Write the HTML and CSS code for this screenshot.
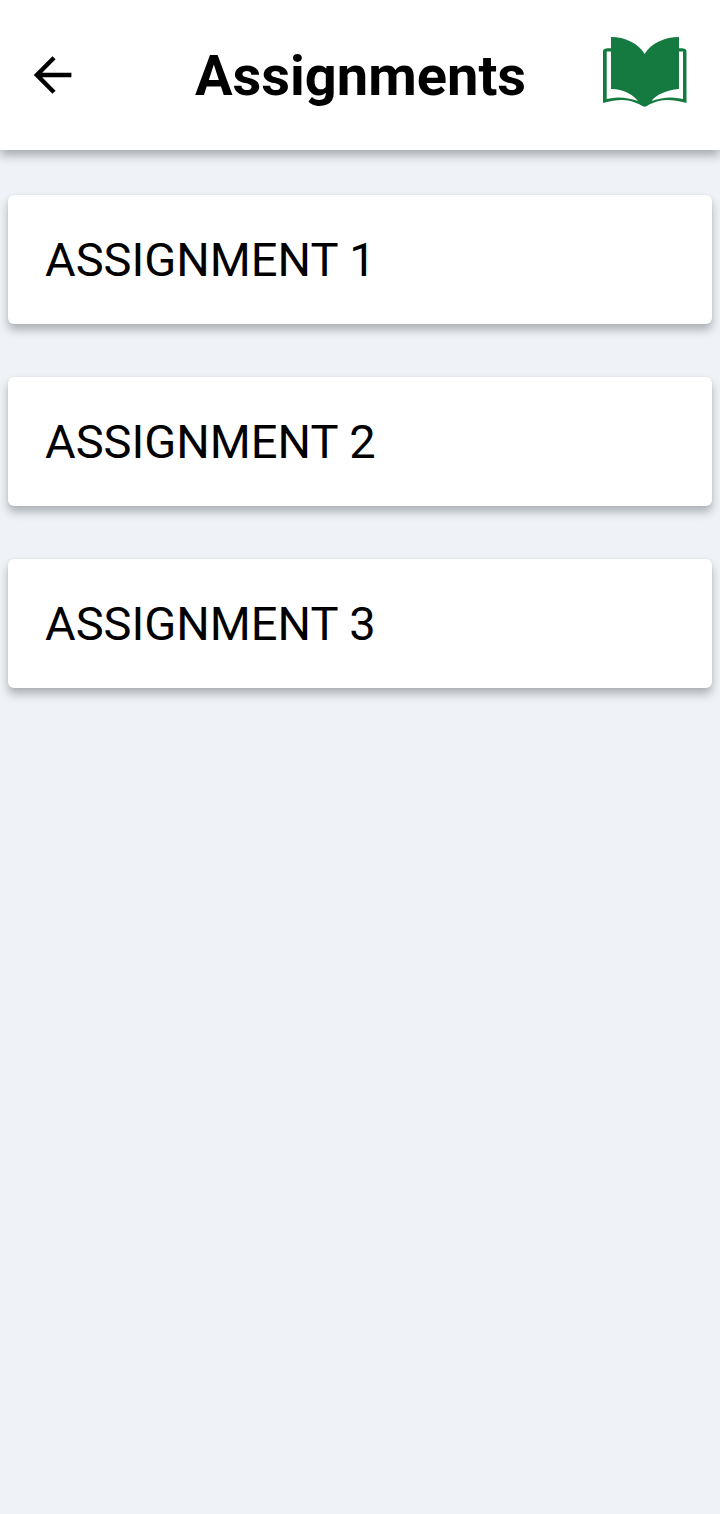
FILE: index.html
```html
<!DOCTYPE html>
<html lang="en">
<head>
<meta charset="utf-8">
<meta name="viewport" content="width=device-width, initial-scale=1">
<title>Assignments</title>
<link rel="stylesheet" href="styles.css">
</head>
<body>
<header class="app-bar">
  <button class="back" type="button" aria-label="Back">
    <svg viewBox="0 0 38 38" width="38" height="38" fill="none" stroke="#000" stroke-width="4.4" aria-hidden="true">
      <path d="M20 1.800 2.900 19 20 36.200M3.500 19H37.400"/>
    </svg>
  </button>
  <h1 class="title">Assignments</h1>
  <svg class="logo" viewBox="0 0 84 70" width="84" height="70" fill="#157a40" aria-hidden="true">
    <path d="M8 0C22 0 35 6 41.7 17 48 6 62 0 76 0V52C63 53 53 58 48.500 64Q65 58 80 62V14.500H76V11Q83.500 11 83.500 14V66Q62 60 50 66C46 67 44 69.700 41.700 69.700S37 67 33 66Q21 60 0 66V14Q0 11 8 11V14.500H3.700V62Q18 58 35 64C30 58 21 52 8 52Z"/>
  </svg>
</header>
<main>
  <ul class="list">
    <li><button class="card" type="button">ASSIGNMENT 1</button></li>
    <li><button class="card" type="button">ASSIGNMENT 2</button></li>
    <li><button class="card" type="button">ASSIGNMENT 3</button></li>
  </ul>
</main>
</body>
</html>
```

FILE: styles.css
```css
* {
  box-sizing: border-box;
}

body {
  margin: 0;
  min-height: 100vh;
  background: #eff3f8;
  color: #000;
  font-family: Roboto, "Noto Sans", sans-serif;
}

.app-bar {
  display: grid;
  grid-template-columns: 84px 1fr 84px;
  align-items: center;
  height: 150px;
  padding: 0 33px 0 34px;
  background: #fff;
  box-shadow: 0 5px 10px rgba(0, 0, 0, 0.32);
}

.back {
  display: flex;
  justify-self: start;
  padding: 0;
  border: 0;
  background: none;
}

.title {
  margin: 0;
  padding-top: 2px;
  font-size: 56px;
  line-height: 64px;
  font-weight: 700;
  text-align: center;
}

.logo {
  display: block;
  margin-bottom: 6px;
}

.list {
  display: flex;
  flex-direction: column;
  gap: 53px;
  margin: 0;
  padding: 45px 8px;
  list-style: none;
}

.card {
  display: block;
  width: 100%;
  padding: 37px 37px 36px;
  border: 0;
  border-radius: 6px;
  background: #fff;
  box-shadow: 0 6px 10px rgba(0, 0, 0, 0.28), 0 0 2px rgba(0, 0, 0, 0.08);
  color: inherit;
  font-family: inherit;
  font-size: 47px;
  line-height: 56px;
  text-align: left;
}
```
